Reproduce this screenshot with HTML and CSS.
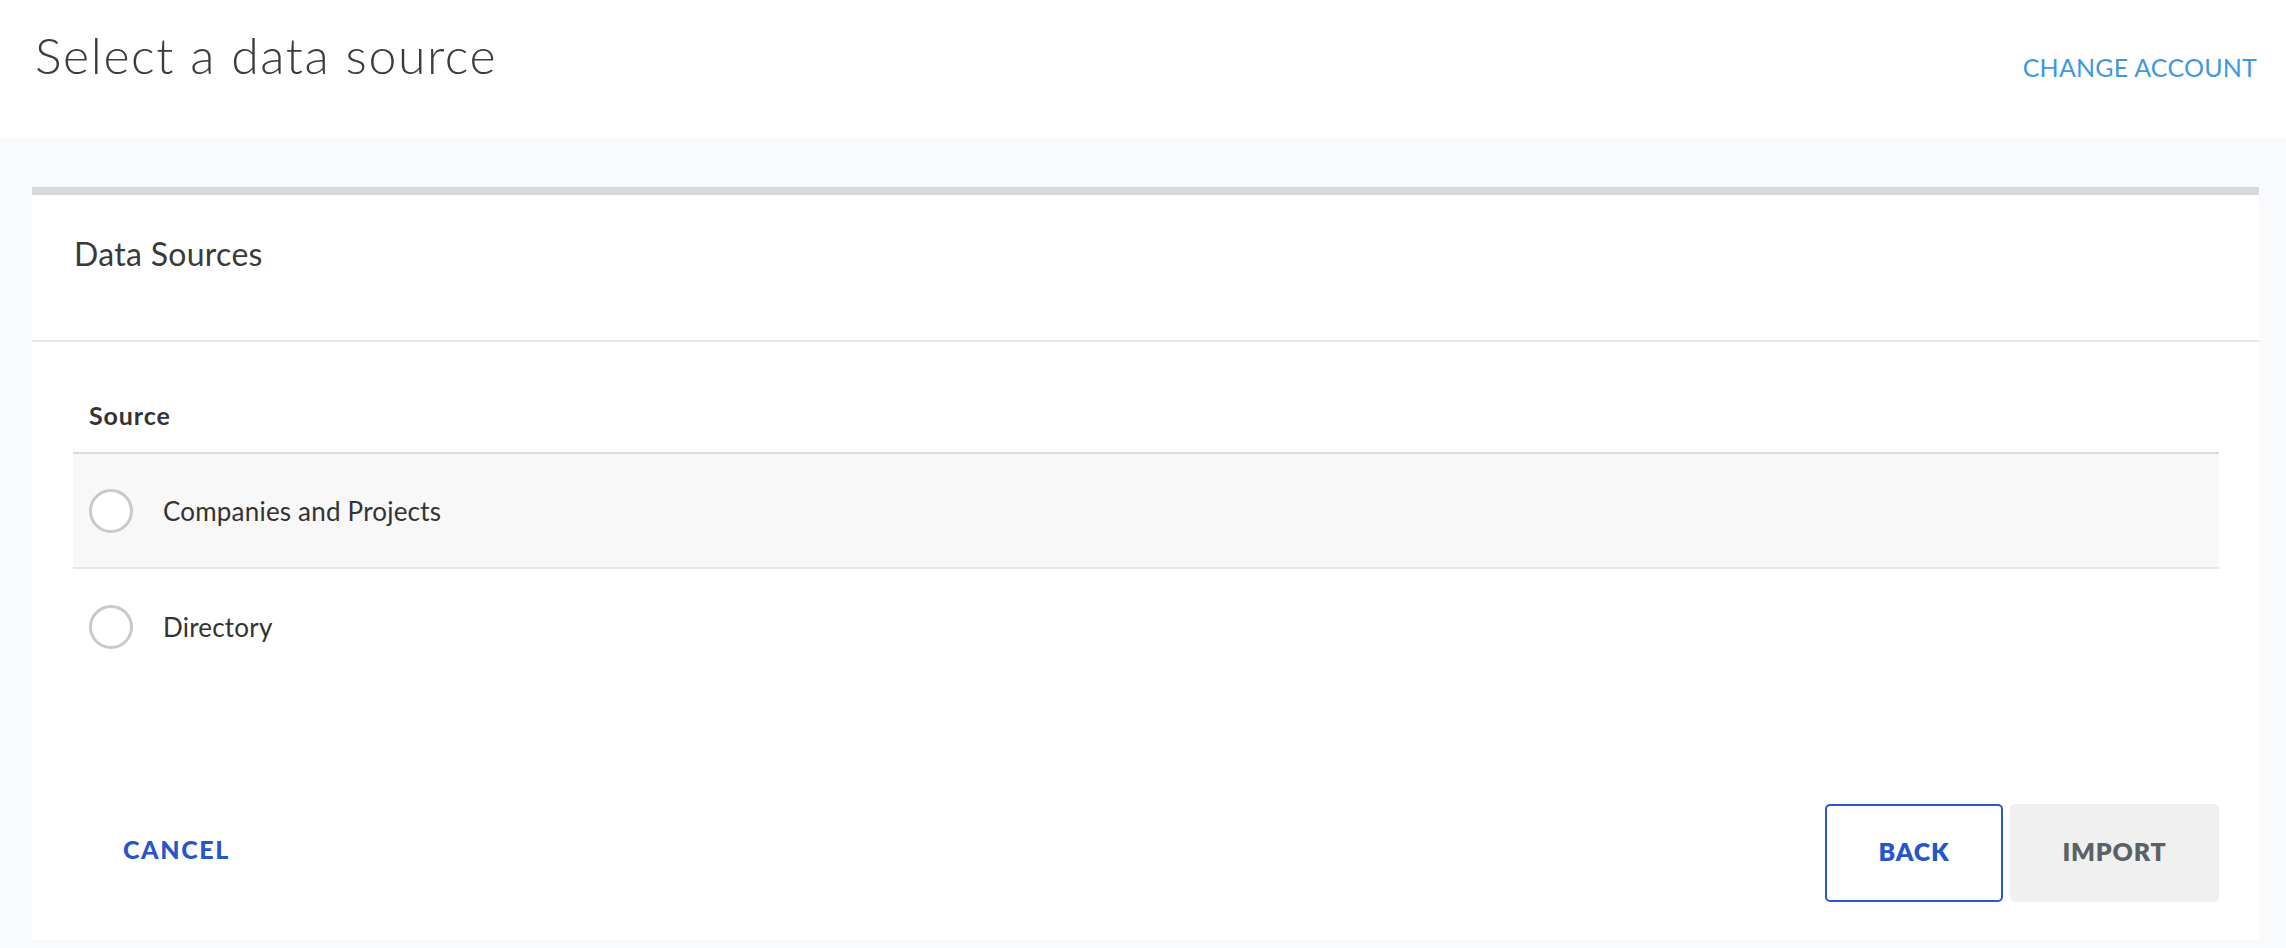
FILE: index.html
```html
<!DOCTYPE html>
<html lang="en">
<head>
    <meta charset="UTF-8">
    <meta name="viewport" content="width=device-width, initial-scale=1.0">
    <title>Select a data source</title>
    <link rel="stylesheet" href="styles.css">
</head>
<body>
    <header class="page-header">
        <h1 class="page-title">Select a data source</h1>
        <a class="change-account" href="#">CHANGE ACCOUNT</a>
    </header>

    <main class="page-body">
        <section class="card">
            <div class="card-header">
                <h2 class="card-title">Data Sources</h2>
            </div>

            <div class="card-content">
                <div class="table">
                    <div class="table-head">Source</div>
                    <label class="table-row row-active">
                        <input type="radio" name="source" class="radio">
                        <span class="row-label">Companies and Projects</span>
                    </label>
                    <label class="table-row">
                        <input type="radio" name="source" class="radio">
                        <span class="row-label">Directory</span>
                    </label>
                </div>
            </div>

            <div class="card-footer">
                <button type="button" class="btn-link">CANCEL</button>
                <div class="footer-actions">
                    <button type="button" class="btn btn-outline">BACK</button>
                    <button type="button" class="btn btn-disabled" disabled>IMPORT</button>
                </div>
            </div>
        </section>
    </main>
</body>
</html>
```

FILE: styles.css
```css
* {
    margin: 0;
    padding: 0;
    box-sizing: border-box;
}

body {
    font-family: Lato, "Open Sans", sans-serif;
    background-color: #f9fafc;
    color: #3a3a3a;
    height: 948px;
    overflow: hidden;
}

.page-header {
    height: 137px;
    background-color: white;
    display: flex;
    justify-content: space-between;
    align-items: flex-start;
    padding: 0 29px 0 35px;
}

.page-title {
    font-size: 50px;
    font-weight: 300;
    line-height: 1;
    margin-top: 30px;
    letter-spacing: 1.6px;
    color: #3c3c3c;
}

.change-account {
    font-size: 25px;
    color: #3f98e0;
    text-decoration: none;
    line-height: 1;
    margin-top: 55px;
    letter-spacing: 0.2px;
}

.page-body {
    padding: 50px 27px 8px 32px;
}

.card {
    height: 753px;
    background-color: white;
    border-top: 8px solid #d5d9dd;
    display: flex;
    flex-direction: column;
}

.card-header {
    height: 147px;
    padding: 43px 42px 0;
    border-bottom: 2px solid #e5e8eb;
}

.card-title {
    font-size: 32px;
    font-weight: 400;
    line-height: 1;
    letter-spacing: 0.3px;
    color: #3a3a3a;
}

.card-content {
    padding: 0 40px 0 41px;
}

.table-head {
    height: 112px;
    padding: 61px 16px 0;
    font-size: 25px;
    font-weight: 700;
    line-height: 1;
    letter-spacing: 0.9px;
    color: #333;
    border-bottom: 2px solid #dcdcdc;
}

.table-row {
    height: 115px;
    display: flex;
    align-items: center;
    gap: 30px;
    padding: 0 16px;
    cursor: pointer;
}

.row-active {
    background-color: #f8f8f8;
    border-bottom: 2px solid #e6e6e6;
}

.radio {
    appearance: none;
    width: 44px;
    height: 44px;
    border: 3px solid #c9c9c9;
    border-radius: 50%;
    background-color: white;
    flex-shrink: 0;
}

.row-label {
    font-size: 26px;
    letter-spacing: 0.2px;
    color: #333;
}

.card-footer {
    margin-top: auto;
    padding: 0 40px 38px 41px;
    display: flex;
    justify-content: space-between;
    align-items: center;
}

.btn-link {
    background: none;
    border: none;
    font-family: inherit;
    font-size: 25px;
    font-weight: 900;
    letter-spacing: 1.6px;
    color: #2756c9;
    padding: 0 0 8px 50px;
    cursor: pointer;
}

.footer-actions {
    display: flex;
    gap: 7px;
}

.btn {
    height: 98px;
    font-family: inherit;
    font-size: 25px;
    font-weight: 800;
    letter-spacing: 0.8px;
    border-radius: 5px;
    padding-bottom: 5px;
    cursor: pointer;
}

.btn-outline {
    width: 178px;
    background-color: white;
    border: 2px solid #2a58c9;
    color: #2756c9;
}

.btn-disabled {
    width: 209px;
    background-color: #f0f0f0;
    border: none;
    color: #5b6265;
    cursor: default;
}
```
